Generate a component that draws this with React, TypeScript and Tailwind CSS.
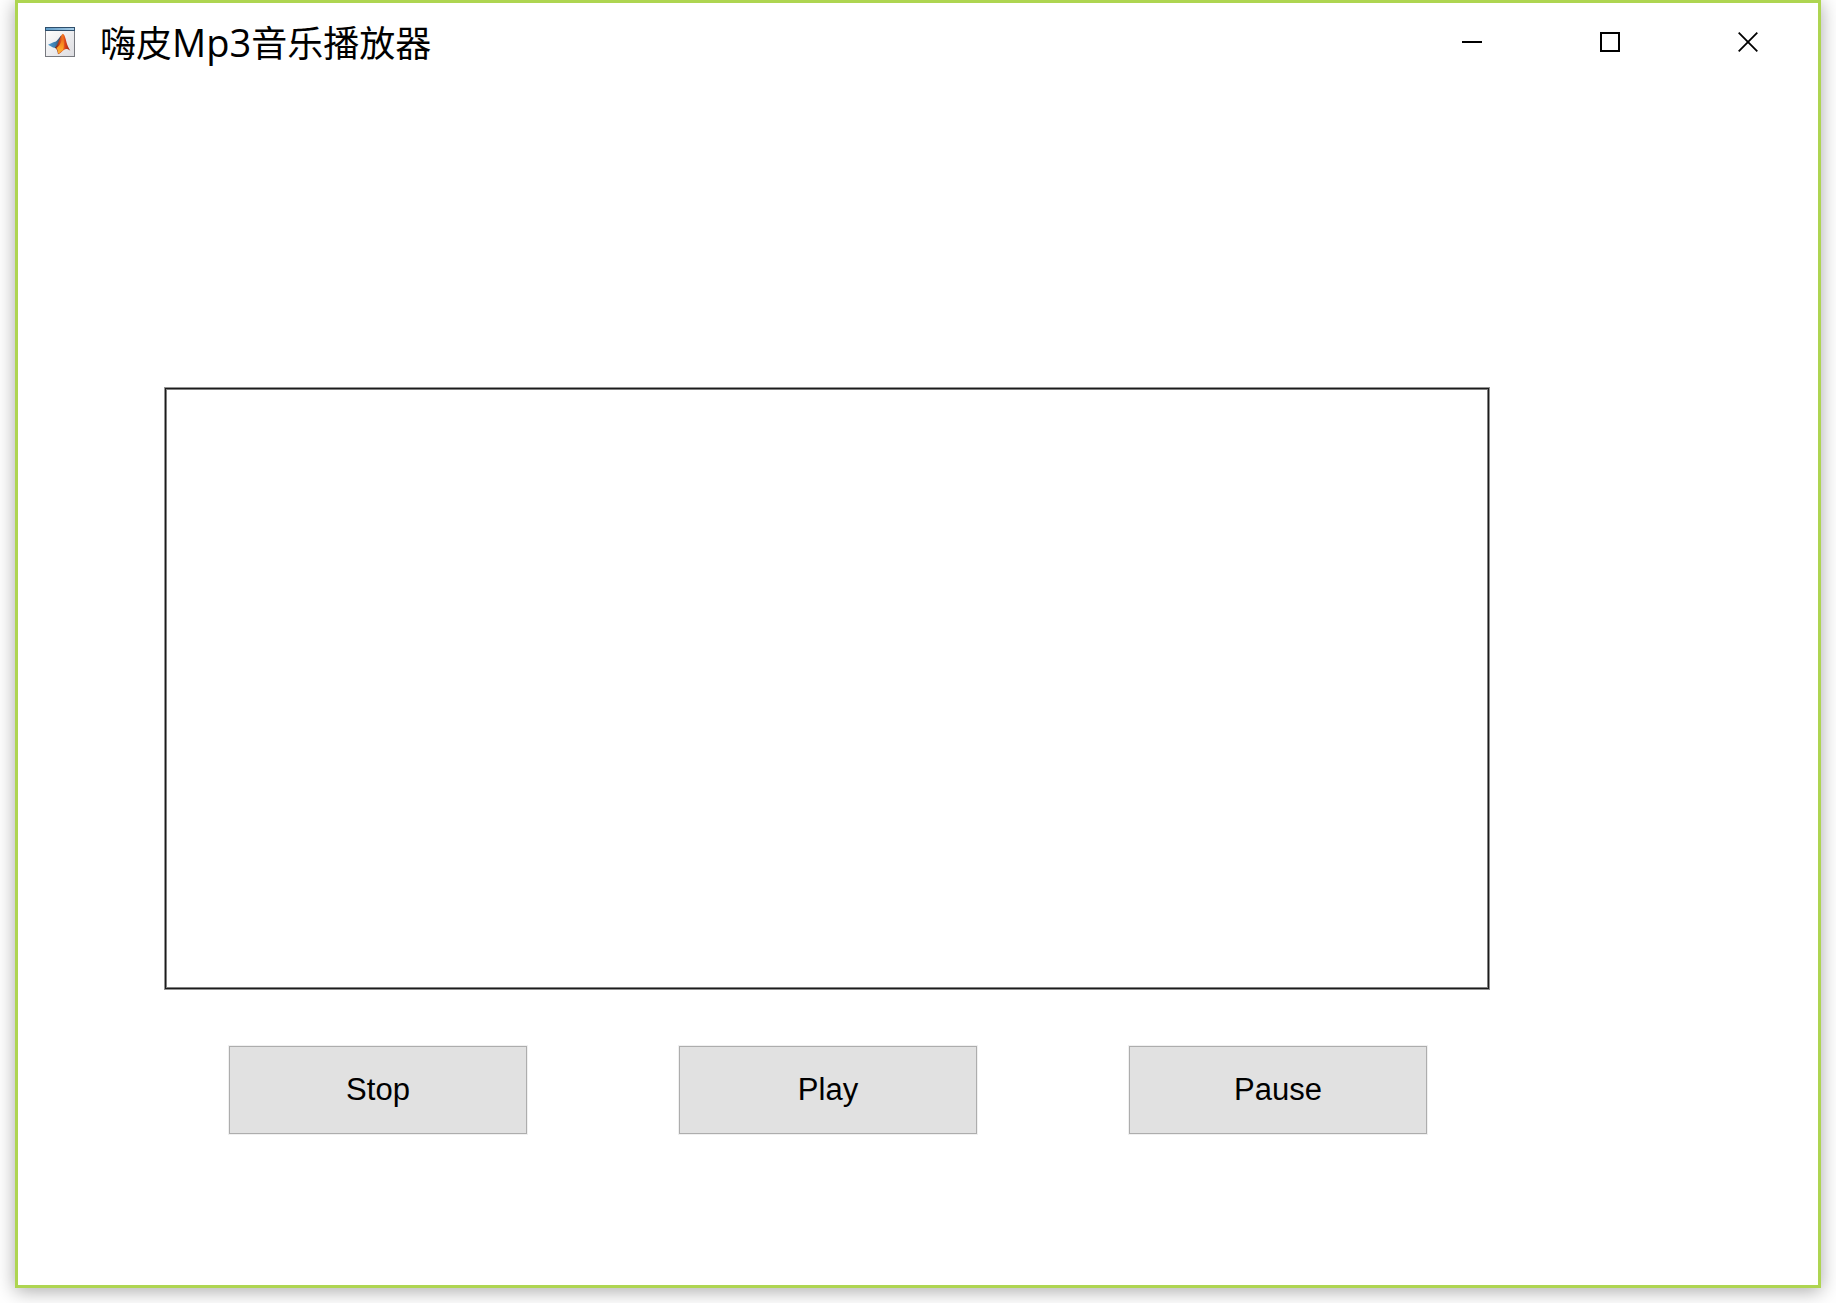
function MatlabIcon() {
  return (
    <svg viewBox="0 0 30 30" className="size-[30px] shrink-0" aria-hidden="true">
      <defs>
        <linearGradient id="paper" x1="0" y1="0" x2="1" y2="1">
          <stop offset="0" stopColor="#ffffff" />
          <stop offset="1" stopColor="#dcdce0" />
        </linearGradient>
        <linearGradient id="bar" x1="0" y1="0" x2="1" y2="0">
          <stop offset="0" stopColor="#5f9cc8" />
          <stop offset="1" stopColor="#a9cde6" />
        </linearGradient>
        <linearGradient id="wing" x1="0" y1="0" x2="1" y2="0">
          <stop offset="0" stopColor="#4a9ad0" />
          <stop offset="0.5" stopColor="#3c7fb0" />
          <stop offset="1" stopColor="#3a3f55" />
        </linearGradient>
        <linearGradient id="peak" x1="0" y1="0" x2="1" y2="0">
          <stop offset="0" stopColor="#5b2018" />
          <stop offset="0.3" stopColor="#c8421a" />
          <stop offset="0.5" stopColor="#f47a20" />
          <stop offset="0.68" stopColor="#d8401a" />
          <stop offset="1" stopColor="#8e2010" />
        </linearGradient>
        <linearGradient id="flame" x1="0" y1="0" x2="0" y2="1">
          <stop offset="0" stopColor="#e8601c" />
          <stop offset="0.6" stopColor="#fb9a24" />
          <stop offset="1" stopColor="#fdb53a" />
        </linearGradient>
      </defs>
      <rect x="0.5" y="0.5" width="29" height="29" fill="url(#paper)" stroke="#77797f" />
      <rect x="0" y="0" width="30" height="4" fill="#2f4f6c" />
      <rect x="1" y="1" width="28" height="2" fill="url(#bar)" />
      <path d="M3 17.8 L9 15 C11.5 15.2 13.5 11.5 16.5 8 L15 17 L10.5 21 L8 20.4 Z" fill="url(#wing)" />
      <path d="M17.8 6.8 C20 7.4 20.8 13 22.2 17.5 C23.2 20.5 24.2 22 25.4 23.8 C23 22 20.8 21.4 18.8 23 C16.5 25 15.5 26.2 13 27.2 C12.6 24.4 12 22 9.8 20.8 C13.5 18.5 15.4 7.6 17.8 6.8 Z" fill="url(#peak)" />
      <path d="M18 9 C18.8 14 19.4 19 18 22.8 C16 24.5 15 26 13.3 26.8 C13 24.5 12.6 22.5 11.4 21 C14.5 19.5 16.5 15 18 9 Z" fill="url(#flame)" />
    </svg>
  );
}

const captionButton =
  "flex w-[138px] items-center justify-center text-black hover:bg-neutral-200";

const controls = ["Stop", "Play", "Pause"];

export default function App() {
  return (
    <div className="flex min-h-screen overflow-hidden bg-white px-[15px] pb-[15px] text-black">
      <main className="flex flex-1 flex-col border-[3px] border-[#aed551] bg-white shadow-[0_3px_18px_rgba(0,0,0,0.34)]">
        <header className="flex h-[78px] items-stretch justify-between">
          <div className="flex items-center gap-[25px] pl-[27px]">
            <MatlabIcon />
            <h1 className="pt-0.5 font-['Open_Sans','Noto_Sans_CJK_SC',sans-serif] text-[36px] leading-[48px] whitespace-nowrap">
              嗨皮<span className="text-[38px]">Mp3</span>音乐播放器
            </h1>
          </div>
          <div className="flex pr-px">
            <button type="button" aria-label="Minimize" className={captionButton}>
              <svg viewBox="0 0 20 20" className="size-5" shapeRendering="crispEdges">
                <path d="M0 10H20" stroke="currentColor" strokeWidth="2" />
              </svg>
            </button>
            <button type="button" aria-label="Maximize" className={captionButton}>
              <svg viewBox="0 0 20 20" className="size-5" shapeRendering="crispEdges">
                <rect x="1" y="1" width="18" height="18" fill="none" stroke="currentColor" strokeWidth="2" />
              </svg>
            </button>
            <button type="button" aria-label="Close" className={captionButton}>
              <svg viewBox="0 0 20 20" className="size-5">
                <path d="M0.7 0.7L19.3 19.3M19.3 0.7L0.7 19.3" stroke="currentColor" strokeWidth="1.8" />
              </svg>
            </button>
          </div>
        </header>

        <div className="flex flex-1 flex-col gap-14 pt-[306px] pr-[328px] pb-[151px] pl-[146px]">
          <section
            aria-label="Waveform"
            className="flex-1 border border-[#929292] shadow-[inset_0_0_0_1px_#1c1c1c,inset_0_0_0_2px_#808080]"
          />
          <div className="flex justify-between pr-[63px] pl-[65px]">
            {controls.map((label) => (
              <button
                key={label}
                type="button"
                className="h-[88px] w-[298px] border border-[#adadad] bg-[#e1e1e1] font-['Liberation_Sans',Arial,sans-serif] text-[31px] leading-10 shadow-[0_0_0_1px_#f0f0f0]"
              >
                {label}
              </button>
            ))}
          </div>
        </div>
      </main>
    </div>
  );
}
